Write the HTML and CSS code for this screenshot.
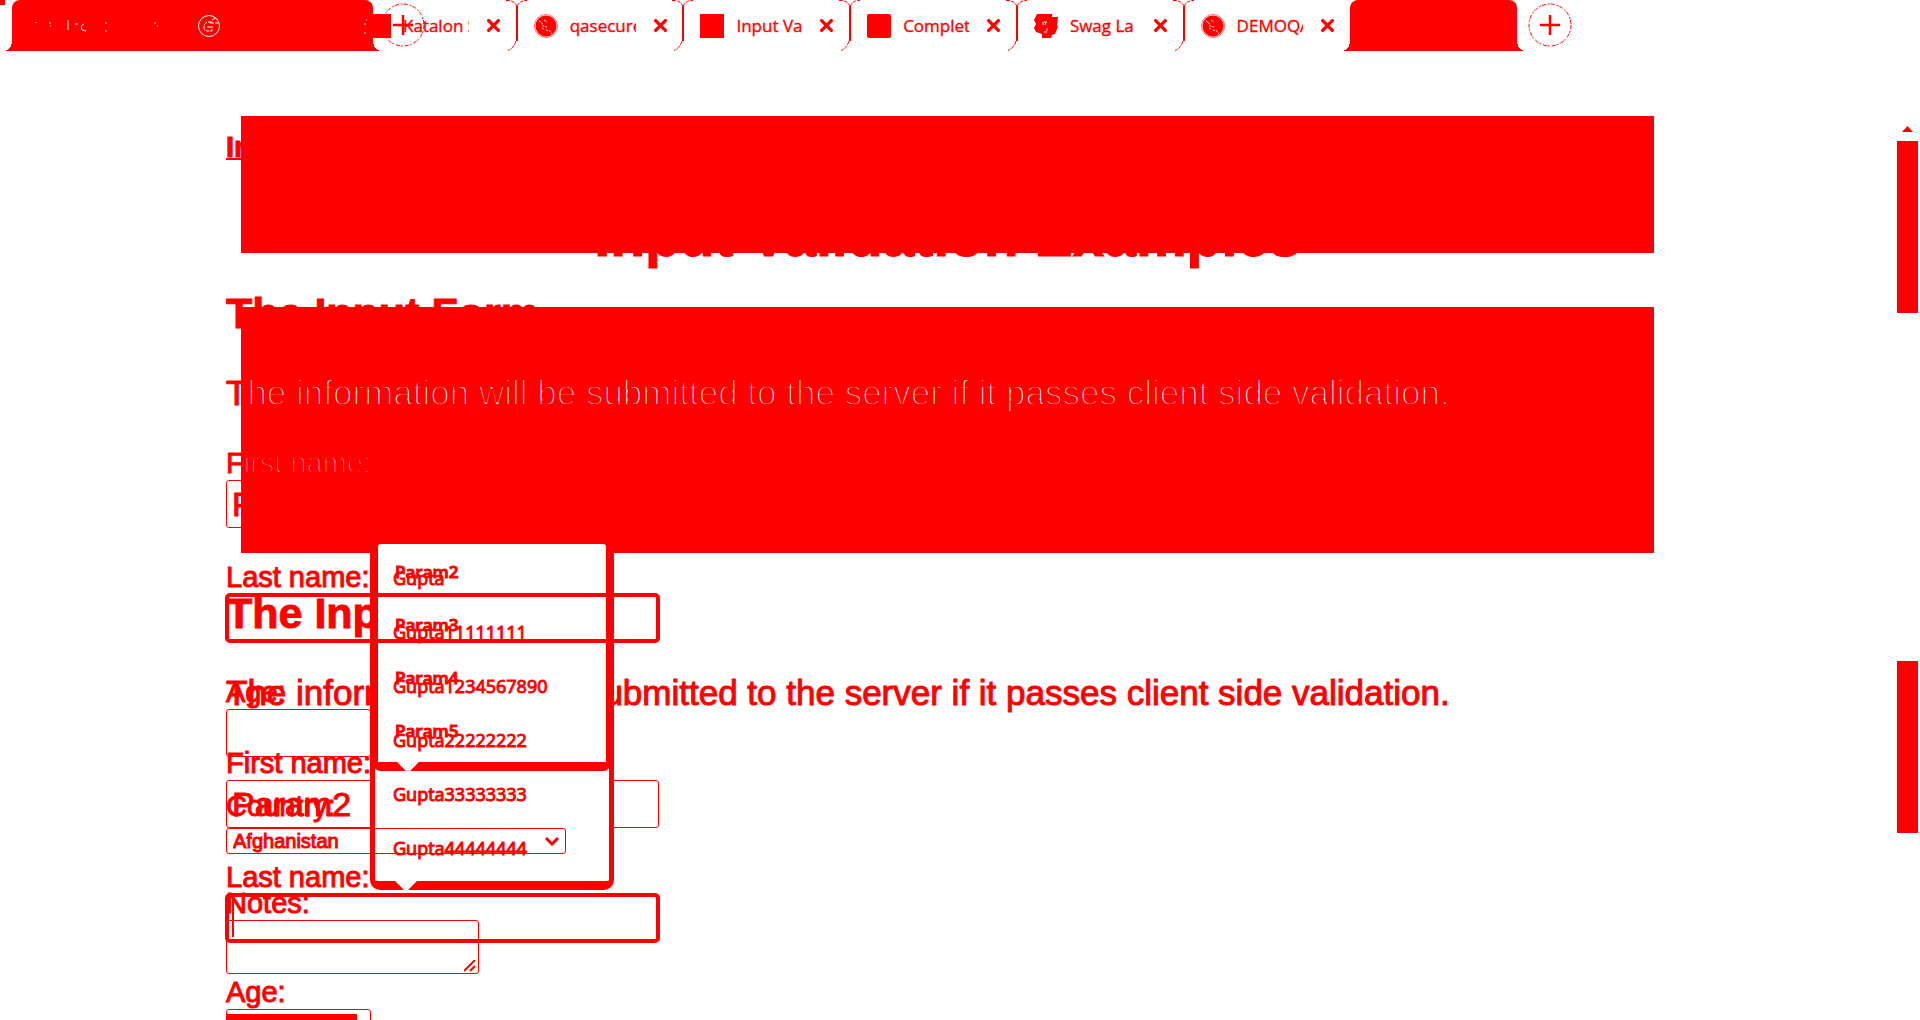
FILE: index.html
```html
<!DOCTYPE html>
<html lang="en">
<head>
<meta charset="utf-8">
<title>Input Validation</title>
<link rel="stylesheet" href="styles.css">
</head>
<body>
<svg class="defs" aria-hidden="true">
  <symbol id="edge" viewBox="0 0 24 52"><path d="M3 .5h3q7 1 8 7q1-6 8-7h2" fill="none" stroke="currentColor" stroke-dasharray="4 1"/><path d="M14 6v5" stroke="currentColor" stroke-width="2"/><path d="M14 11v30" stroke="currentColor" stroke-width="2"/><path d="M13 41q-2 7-8 9.500" fill="none" stroke="currentColor" stroke-dasharray="4 1"/></symbol>
  <symbol id="close" viewBox="0 0 12 12"><path d="M.5 .5l11 11M11.500 .5l-11 11" stroke="currentColor" stroke-width="3"/></symbol>
  <symbol id="plus" viewBox="0 0 44 44"><circle cx="22" cy="22" r="21" fill="none" stroke="currentColor" stroke-dasharray="4 2 2 1"/><path d="M12 22h20M22 12v20" stroke="currentColor" stroke-width="2.500"/></symbol>
  <symbol id="globe" viewBox="0 0 24 24"><circle cx="12" cy="12" r="11.500" fill="none" stroke="currentColor" stroke-width=".6"/><circle cx="12" cy="12" r="10.500" fill="currentColor"/><path d="M5 7l3 2 1 3 4 1M10 6l3 2M12 16l4 1 2 3M8 14l2 1" fill="none" stroke="#fff" stroke-dasharray="2 1"/></symbol>
  <symbol id="square" viewBox="0 0 24 24"><path d="M0 0h24v24H0z" fill="currentColor"/></symbol>
  <symbol id="rounded" viewBox="0 0 24 24"><rect width="24" height="24" rx="2" fill="currentColor"/></symbol>
  <symbol id="swag" viewBox="0 0 24 24"><path d="M3 0h15v3h6l-1 9h1l-3 8-3 1-1 3H8v-4l-6-2-2-4 2-4-2-4z" fill="currentColor"/><path d="M9 11v-3h4M13 14v4l-3 0M12 8l-1 3" fill="none" stroke="#fff" stroke-dasharray="3 1"/></symbol>
</svg>

<nav class="strip" aria-label="Tabs">
  <span class="corner"></span>
  <div class="solid wide">
    <svg class="specks" viewBox="0 0 361 51" aria-hidden="true"><path d="M24 22v1M38 22v2M38 26h1M56 20v10M63 24h3M72 24q-4 1-2 6l4 1M94 22v2M94 30v2M142 23h2M145 26h1M355 19v2M352 24h2M352 33h2M356 33h2" fill="none" stroke="#fff"/><circle cx="197" cy="26" r="10.500" fill="none" stroke="#fff"/><path d="M200 20l4-2M200 22h-5l-3 3v4l3 2h5v-5M195 27h4M198 23h8" fill="none" stroke="#fff" stroke-dasharray="4 1"/></svg>
  </div>
  <div class="tabs">
    <div class="tab"><svg class="ring"><use href="#plus"/></svg><svg class="icon"><use href="#square"/></svg><span class="name">Katalon S</span><button class="close" aria-label="Close"><svg><use href="#close"/></svg></button><svg class="edge"><use href="#edge"/></svg></div>
    <div class="tab"><svg class="icon"><use href="#globe"/></svg><span class="name">qasecure</span><button class="close" aria-label="Close"><svg><use href="#close"/></svg></button><svg class="edge"><use href="#edge"/></svg></div>
    <div class="tab"><svg class="icon"><use href="#square"/></svg><span class="name">Input Va</span><button class="close" aria-label="Close"><svg><use href="#close"/></svg></button><svg class="edge"><use href="#edge"/></svg></div>
    <div class="tab"><svg class="icon"><use href="#rounded"/></svg><span class="name">Complet</span><button class="close" aria-label="Close"><svg><use href="#close"/></svg></button><svg class="edge"><use href="#edge"/></svg></div>
    <div class="tab"><svg class="icon"><use href="#swag"/></svg><span class="name">Swag La</span><button class="close" aria-label="Close"><svg><use href="#close"/></svg></button><svg class="edge"><use href="#edge"/></svg></div>
    <div class="tab"><svg class="icon"><use href="#globe"/></svg><span class="name">DEMOQA</span><button class="close" aria-label="Close"><svg><use href="#close"/></svg></button></div>
    <div class="tab solid"></div>
  </div>
  <button class="add" aria-label="New tab"><svg><use href="#plus"/></svg></button>
</nav>

<main class="view">
  <div class="stack">
    <section class="layer back">
      <div class="band short"></div>
      <div class="band tall"></div>
      <h2 class="title">The Input Form</h2>
      <p class="info">The information will be submitted to the server if it passes client side validation.</p>
      <div class="field"><label for="first2">First name:</label><input class="box" id="first2" value="Param2"></div>
      <div class="field"><label for="last2">Last name:</label><input class="box focused" id="last2"><span class="caret"></span></div>
      <div class="field"><label for="age2">Age:</label><input class="box small" id="age2"></div>
    </section>

    <ul class="popup gupta">
      <li>Gupta</li><li>Gupta11111111</li><li>Gupta1234567890</li><li>Gupta22222222</li><li>Gupta33333333</li><li>Gupta44444444</li>
    </ul>
    <ul class="popup param">
      <li>Param2</li><li>Param3</li><li>Param4</li><li>Param5</li>
    </ul>

    <section class="layer front">
      <a class="crumb" href="#form">Input Validation</a>
      <h1 class="headline">Input Validation Examples</h1>
      <h2 class="title" id="form">The Input Form</h2>
      <p class="info"><span class="lead">T</span><span class="ghost">he information will be submitted to the server if it passes client side validation.</span></p>
      <div class="field"><label for="first1"><span class="lead">F</span><span class="ghost">irst name:</span></label><input class="box" id="first1" value="Param2"></div>
      <div class="field"><label for="last1">Last name:</label><input class="box focused" id="last1"></div>
      <div class="field"><label for="age1">Age:</label><input class="box small" id="age1"></div>
      <div class="field"><label for="country">Country:</label>
        <span class="pick"><select id="country"><option>Afghanistan</option></select><svg class="chevron" viewBox="0 0 14 9" aria-hidden="true"><path d="M1 1l6 6 6-6" fill="none" stroke="currentColor" stroke-width="3"/></svg></span></div>
      <div class="field"><label for="notes">Notes:</label>
        <span class="area"><textarea id="notes"></textarea><svg class="grip" viewBox="0 0 12 12" aria-hidden="true"><path d="M0 11L11 0M6 11l5-5" stroke="currentColor" stroke-width="2"/></svg></span></div>
      <button class="send" aria-label="Submit"></button>
    </section>
  </div>

  <aside class="rail" aria-hidden="true">
    <svg class="up" viewBox="0 0 11 6"><path d="M0 6l5.500-6L11 6z" fill="currentColor"/></svg>
    <div class="thumb"></div>
    <div class="thumb lower"></div>
  </aside>
</main>
</body>
</html>
```

FILE: styles.css
```css
:root { --ink: #f00; }
* { box-sizing: border-box; }
body {
  margin: 0;
  height: 100vh;
  overflow: hidden;
  display: flex;
  flex-direction: column;
  background: #fff;
  color: var(--ink);
  font-family: "Liberation Sans", Arial, sans-serif;
  -webkit-text-stroke: 1px var(--ink);
}
button { padding: 0; border: 0; background: none; color: inherit; display: grid; place-items: center; }
.defs { position: absolute; width: 0; height: 0; }

/* tab strip */
.strip {
  position: relative;
  flex: none;
  display: flex;
  align-items: center;
  height: 51px;
  padding-left: 12px;
  font-family: "Open Sans", "Noto Sans", sans-serif;
  -webkit-text-stroke: 0;
}
.corner { position: absolute; left: 0; top: 0; width: 5px; height: 5px; background: var(--ink); }
.solid { position: relative; background: var(--ink); border-radius: 8px 8px 0 0; }
.solid::before, .solid::after { content: ""; position: absolute; bottom: 0; width: 8px; height: 10px; }
.solid::before { right: 100%; background: radial-gradient(ellipse 8px 10px at 0 0, #fff 98%, var(--ink)); }
.solid::after { left: 100%; background: radial-gradient(ellipse 8px 10px at 100% 0, #fff 98%, var(--ink)); }
.wide { flex: none; width: 361px; height: 51px; }
.specks { display: block; width: 361px; height: 51px; }
.tabs { flex: none; display: flex; width: 1167px; height: 51px; margin-left: -23px; }
.tab { position: relative; flex: 1 1 0; min-width: 0; display: flex; align-items: center; padding-left: 17px; }
.icon { flex: none; width: 24px; height: 24px; }
.name { flex: none; width: 66px; margin-left: 12px; overflow: hidden; white-space: nowrap; font-size: 17px; line-height: 24px; -webkit-text-stroke: 1px var(--ink); -webkit-text-stroke-width: thin; }
.close { width: 13px; height: 13px; margin-left: 18px; }
.close svg { width: 13px; height: 13px; }
.edge { position: absolute; right: -10px; top: 0; width: 24px; height: 52px; }
.ring { position: absolute; left: 31px; top: 3px; width: 44px; height: 44px; }
.add { margin-left: 11px; margin-bottom: 1px; width: 44px; height: 44px; }
.add svg { width: 44px; height: 44px; }

/* page area */
.view { flex: 1; min-height: 0; display: flex; }
.stack { position: relative; flex: 1; display: grid; padding: 0 227px 0 226px; }
.layer { grid-area: 1 / 1; display: flex; flex-direction: column; align-items: stretch; }
.front { position: relative; padding-top: 80px; }
.back { padding-top: 65px; }
.band { flex: none; margin: 0 15px; background: var(--ink); }
.short { height: 137px; }
.tall { height: 246px; margin-top: 54px; }

.crumb { align-self: flex-start; color: inherit; font-size: 29px; font-weight: bold; line-height: 32px; text-decoration-thickness: 2px; }
.headline { margin: 41px 0 0; font-size: 57px; line-height: 64px; text-align: center; }
.title { margin: 21px 0 0; font-size: 43px; line-height: 48px; }
.back .title { margin-top: 36px; }
.info { margin: 36px 0 1px; font-size: 35px; line-height: 40px; white-space: nowrap; }
.ghost { color: #fff; -webkit-text-stroke: 2px var(--ink); }

.field { position: relative; display: flex; flex-direction: column; align-items: flex-start; margin-top: 33px; }
.field label { font-size: 29px; line-height: 32px; margin-bottom: 1px; }
.box {
  width: 433px;
  height: 48px;
  padding: 0 7px 0 5px;
  border: 1px solid var(--ink);
  border-radius: 3px;
  outline: 0;
  background: none;
  color: inherit;
  font: 34px/46px "Liberation Sans", Arial, sans-serif;
  -webkit-text-stroke: 1px var(--ink);
}
.focused { width: 435px; height: 50px; margin: -1px 0 0 -1px; border-width: 4px; border-radius: 5px; }
.small { width: 145px; }
.caret { position: absolute; left: 6px; bottom: 6px; width: 2px; height: 40px; background: var(--ink); }

.pick { position: relative; margin-top: 5px; color: var(--ink); }
.pick select {
  display: block;
  appearance: none;
  width: 340px;
  height: 26px;
  padding: 0 6px;
  border: 1px solid var(--ink);
  border-radius: 3px;
  background: none;
  color: inherit;
  font: 20px/24px "Liberation Sans", Arial, sans-serif;
  -webkit-text-stroke: 1px var(--ink);
}
.chevron { position: absolute; right: 7px; top: 9px; width: 14px; height: 9px; }
.area { position: relative; }
.area textarea { display: block; width: 253px; height: 54px; border: 1px solid var(--ink); border-radius: 3px; background: none; resize: none; }
.grip { position: absolute; right: 3px; bottom: 2px; width: 12px; height: 12px; }
.send { width: 130px; height: 40px; margin: 40px 0 0 1px; background: var(--ink); }

/* suggestion lists anchored to the name fields */
.popup {
  position: absolute;
  margin: 0;
  list-style: none;
  border: solid var(--ink);
  background: #fff;
  font-family: "Open Sans", "Noto Sans", sans-serif;
  white-space: nowrap;
}
.popup::after { content: ""; position: absolute; top: 100%; width: 22px; height: 11px; background: #fff; clip-path: polygon(0 0, 100% 0, 50% 100%); }
.gupta { left: 370px; top: 488px; width: 244px; height: 351px; padding: 7px 18px; border-width: 5px 5px 9px; border-radius: 10px; font-size: 18px; line-height: 54px; }
.gupta::after { left: 20px; }
.param { left: 373px; top: 488px; width: 238px; height: 232px; padding: 1px 17px; border-width: 5px 5px 9px; border-radius: 8px; background: none; font-size: 17px; font-weight: 600; line-height: 53px; }
.param::after { left: 19px; }

/* scroll rail */
.rail { flex: none; width: 23px; margin-right: 1px; padding-top: 75px; display: flex; flex-direction: column; align-items: center; }
.up { width: 11px; height: 6px; }
.thumb { flex: none; width: 21px; height: 172px; margin-top: 9px; background: var(--ink); }
.lower { margin-top: 348px; }
```
